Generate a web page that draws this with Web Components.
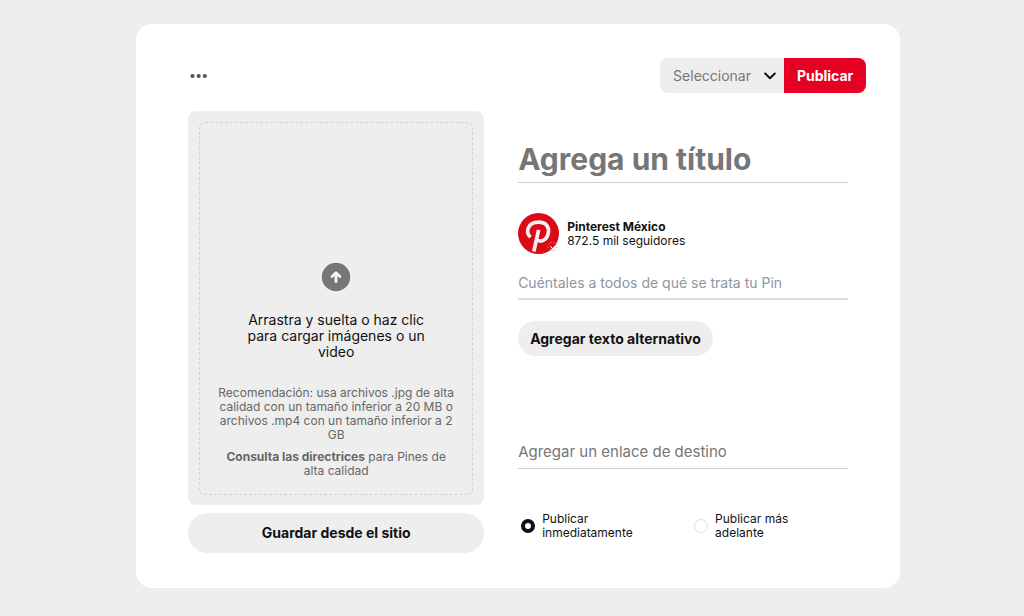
<!DOCTYPE html>
<html lang="es">
<head>
<meta charset="utf-8">
<meta name="viewport" content="width=device-width, initial-scale=1">
<title>Crear Pin</title>
<style>
  html { background: #eee; }
  body { margin: 0; font-family: Inter, "Liberation Sans", sans-serif; font-size: 14px; line-height: 16px; color: #111; }
</style>
</head>
<body>
<pin-builder>
  <pin-toolbar slot="toolbar"></pin-toolbar>
  <pin-dropzone slot="media"></pin-dropzone>
  <pin-button slot="media" wide>Guardar desde el sitio</pin-button>
  <pin-field slot="details" kind="title" label="Agrega un título"></pin-field>
  <pin-profile slot="details">
    <span slot="name">Pinterest México</span>
    <span slot="followers">872.5 mil seguidores</span>
  </pin-profile>
  <pin-field slot="details" kind="description" label="Cuéntales a todos de qué se trata tu Pin"></pin-field>
  <pin-button slot="details">Agregar texto alternativo</pin-button>
  <pin-field slot="details" kind="link" label="Agregar un enlace de destino"></pin-field>
  <pin-schedule slot="details"></pin-schedule>
</pin-builder>
<script>
  class Base extends HTMLElement {
    constructor() {
      super();
      this.attachShadow({ mode: "open" }).innerHTML =
        `<style>*{box-sizing:border-box}button,input,select{font:inherit;color:inherit;margin:0}${this.constructor.css}</style>${this.constructor.html}`;
    }
  }

  customElements.define("pin-builder", class extends Base {
    static css = `
      :host { display: block; padding: 24px 12.1% 28px 13.3%; }
      main { background: #fff; border-radius: 16px; padding: 34px 34px 35px 52px; }
      .columns { display: grid; grid-template-columns: 296fr 330fr; gap: 34px; margin-top: 18px; padding-right: 18px; }
      .media { display: flex; flex-direction: column; gap: 8px; }
      .details { display: flex; flex-direction: column; align-items: stretch; padding-top: 24px; }`;
    static html = `
      <main>
        <slot name="toolbar"></slot>
        <div class="columns">
          <div class="media"><slot name="media"></slot></div>
          <div class="details"><slot name="details"></slot></div>
        </div>
      </main>`;
  });

  customElements.define("pin-toolbar", class extends Base {
    static css = `
      :host { display: flex; justify-content: space-between; align-items: center; }
      button { border: 0; cursor: pointer; }
      .more { background: none; padding: 8px 2px; display: flex; }
      .publish { display: flex; height: 35px; border-radius: 8px; overflow: hidden; }
      .board { display: grid; width: 124px; background: #eee; align-items: center; }
      .board > * { grid-area: 1 / 1; }
      select { appearance: none; border: 0; background: none; height: 100%; padding: 0 32px 0 13px; color: #767676; }
      .board svg { justify-self: end; margin-right: 8px; pointer-events: none; }
      .red { width: 82px; padding: 0; background: #e60023; color: #fff; font-weight: 700; }`;
    static html = `
      <button class="more" type="button" aria-label="Más opciones">
        <svg width="18" height="6" viewBox="0 0 18 6" fill="#555"><circle cx="2.500" cy="3" r="2.1"/><circle cx="8.700" cy="3" r="2.1"/><circle cx="14.800" cy="3" r="2.1"/></svg>
      </button>
      <div class="publish">
        <div class="board">
          <select aria-label="Tablero"><option>Seleccionar</option></select>
          <svg width="12" height="8" viewBox="0 0 12 8" fill="none" stroke="#111" stroke-width="2" stroke-linecap="round" stroke-linejoin="round"><path d="M1.2 1.5 6 6.2l4.800-4.700"/></svg>
        </div>
        <button class="red" type="button">Publicar</button>
      </div>`;
  });

  customElements.define("pin-dropzone", class extends Base {
    static css = `
      :host { display: block; background: #eee; border-radius: 8px; padding: 11px 11px 10px; }
      .zone { border: 1px dashed #d2d2d2; border-radius: 6px; padding: 139px 15px 16px; text-align: center; }
      label { display: block; cursor: pointer; }
      input { position: absolute; width: 1px; height: 1px; opacity: 0; }
      svg { display: block; margin: 0 auto 20px; }
      .prompt { display: block; padding: 0 30px; }
      p { margin: 0; font-size: 12px; line-height: 14px; color: #666; }
      .tip { margin-top: 26px; }
      .rules { margin-top: 8px; }
      a { color: inherit; font-weight: 700; text-decoration: none; }`;
    static html = `
      <div class="zone">
        <label>
          <input type="file" accept=".jpg,.mp4">
          <svg width="30" height="30" viewBox="0 0 30 30"><circle cx="15" cy="15" r="14.2" fill="#767676"/><path d="M15 19.800v-8.300M11 14.600 15 10.700l4 3.900" fill="none" stroke="#f4f4f4" stroke-width="2.800" stroke-linecap="round" stroke-linejoin="round"/></svg>
          <span class="prompt">Arrastra y suelta o haz clic para cargar imágenes o un video</span>
        </label>
        <p class="tip">Recomendación: usa archivos .jpg de alta calidad con un tamaño inferior a 20 MB o archivos .mp4 con un tamaño inferior a 2 GB</p>
        <p class="rules"><a href="#directrices">Consulta las directrices</a> para Pines de alta calidad</p>
      </div>`;
  });

  customElements.define("pin-button", class extends Base {
    static css = `
      :host { display: block; margin-top: 21px; }
      :host([wide]) { margin-top: 0; }
      button { border: 0; border-radius: 20px; background: #eee; color: #111; font-weight: 700; height: 35px; padding: 0 12px; cursor: pointer; }
      :host([wide]) button { width: 100%; height: 40px; }`;
    static html = `<button type="button"><slot></slot></button>`;
  });

  customElements.define("pin-field", class extends Base {
    static css = `
      :host { display: block; }
      input { display: block; width: 100%; border: 0; border-bottom: 1px solid #cdcdcd; border-radius: 0; padding: 0; background: none; outline: 0; height: 34px; }
      input::placeholder { color: #767676; opacity: 1; }
      :host([kind=title]) input { font-size: 30px; font-weight: 700; height: 48px; }
      :host([kind=description]) { margin-top: 13px; }
      :host([kind=description]) input { border-bottom: 2px solid #ddd; height: 33px; }
      :host([kind=description]) input::placeholder { color: #8e95a3; }
      :host([kind=link]) { margin-top: 79px; }
      :host([kind=link]) input { font-size: 15px; }`;
    static html = `<input type="text">`;
    connectedCallback() {
      const input = this.shadowRoot.querySelector("input");
      input.placeholder = this.getAttribute("label");
      input.setAttribute("aria-label", this.getAttribute("label"));
    }
  });

  customElements.define("pin-profile", class extends Base {
    static css = `
      :host { display: flex; align-items: center; gap: 8px; margin-top: 30px; font-size: 12px; line-height: 14px; }
      svg { flex: none; }
      .text { display: grid; }
      .name { font-weight: 700; }`;
    static html = `
      <svg width="41" height="41" viewBox="0 0 41 41" role="img" aria-label="Pinterest">
        <circle cx="20.500" cy="20.500" r="20.500" fill="#dc0a16"/>
        <path d="M12.600 24.200C7 19.500 9.500 9.200 20.500 9.200c8.200 0 11 5.300 9.700 11.200-1.400 7-8.200 9.800-11.600 5.700M20.600 16.800 15.800 38.500" fill="none" stroke="#f0f0f0" stroke-width="3.700"/>
        <circle cx="34.500" cy="33.500" r="4.400" fill="none" stroke="#f08a8f" stroke-width=".8" stroke-dasharray="1.600 1.400"/>
        <path d="M32.500 33l1.700 2.500 1.800-1 1.500 1.500" fill="none" stroke="#fff"/>
      </svg>
      <div class="text"><span class="name"><slot name="name"></slot></span><slot name="followers"></slot></div>`;
  });

  customElements.define("pin-schedule", class extends Base {
    static css = `
      :host { display: block; margin-top: 43px; font-size: 12px; line-height: 14px; }
      fieldset { border: 0; margin: 0; padding: 0 0 0 3px; display: grid; grid-template-columns: 173fr 154fr; }
      label { display: flex; align-items: center; gap: 7px; cursor: pointer; }
      span { max-width: 100px; }
      input { appearance: none; flex: none; width: 14px; height: 14px; border: 1px solid #ddd; border-radius: 50%; background: #fff; }
      input:checked { border: 4px solid #111; }`;
    static html = `
      <fieldset aria-label="Momento de publicación">
        <label><input type="radio" name="when" checked><span>Publicar inmediatamente</span></label>
        <label><input type="radio" name="when"><span>Publicar más adelante</span></label>
      </fieldset>`;
  });
</script>
</body>
</html>
